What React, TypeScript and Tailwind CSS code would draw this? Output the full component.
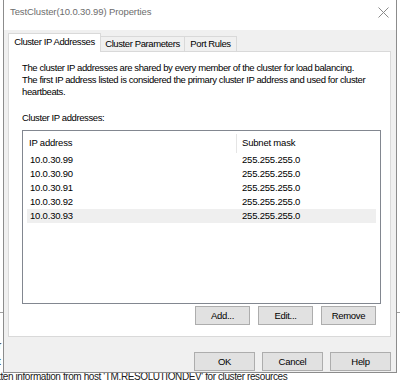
import React from "react"

const ips = ["10.0.30.99", "10.0.30.90", "10.0.30.91", "10.0.30.92", "10.0.30.93"]

function Btn({ label, w }: { label: string; w: string }) {
  return (
    <button className={`${w} h-[19px] bg-[#e1e1e1] border border-[#adadad] text-[9.5px] tracking-[-0.3px] text-black leading-none flex items-center justify-center`}>
      {label}
    </button>
  )
}

export default function App() {
  return (
    <div className="w-[400px] h-[380px] relative overflow-hidden bg-white text-black text-[9.5px] tracking-[-0.4px]" style={{ fontFamily: '"Liberation Sans", Arial, sans-serif' }}>
      {/* background window behind the dialog */}
      <div className="absolute left-0 top-[312px] w-full h-px bg-[#a0a0a0]" />
      <div className="absolute left-[-2px] top-[372px] text-[10px] leading-none text-[#202020] whitespace-nowrap">
        tten information from host 'TM.RESOLUTIONDEV' for cluster resources
      </div>
      <div className="absolute left-[-2px] top-[338px] flex flex-col text-[10px] leading-[16px] text-[#202020]">
        <span>r</span>
        <span>t</span>
      </div>

      {/* dialog */}
      <div className="absolute left-[3px] top-0 w-[394px] h-[373px] bg-[#f0f0f0] border border-t-0 border-[#8c8c8c] flex flex-col">
        <div className="h-[30px] bg-white flex items-center justify-between pl-[6px] pr-[7px] shrink-0">
          <span className="text-[9.5px] tracking-[-0.1px] text-[#6d6d6d] mt-[-5px]">TestCluster(10.0.30.99) Properties</span>
          <svg width="11" height="11" viewBox="0 0 11 11" className="mt-[-5px]">
            <path d="M0.5 0.5 L10.5 10.5 M10.5 0.5 L0.5 10.5" stroke="#8a8a8a" strokeWidth="1" fill="none" />
          </svg>
        </div>

        <div className="px-[4px] pt-[3px] flex flex-col flex-1">
          {/* tabs */}
          <div className="flex items-end h-[18px] relative z-10 whitespace-nowrap">
            <div className="h-[19px] w-[93px] bg-white border border-b-0 border-[#d9d9d9] flex items-center justify-center -mb-px pb-[1px]">
              Cluster IP Addresses
            </div>
            <div className="h-[15px] w-[84px] bg-[#f0f0f0] border border-l-0 border-b-0 border-[#d9d9d9] flex items-center justify-center">
              Cluster Parameters
            </div>
            <div className="h-[15px] w-[52px] bg-[#f0f0f0] border border-l-0 border-b-0 border-[#d9d9d9] flex items-center justify-center">
              Port Rules
            </div>
          </div>

          {/* panel */}
          <div className="h-[286px] w-[383px] bg-white border border-[#d9d9d9] px-[13px] pt-[10px] flex flex-col">
            <p className="leading-[12px]">
              The cluster IP addresses are shared by every member of the cluster for load balancing.
              <br />
              The first IP address listed is considered the primary cluster IP address and used for cluster
              <br />
              heartbeats.
            </p>
            <div className="leading-[12px] mt-[14px]">Cluster IP addresses:</div>

            <div className="mt-[6px] w-[359px] h-[174px] border border-[#828790] flex flex-col pt-[3px] tracking-[-0.2px]">
              <div className="flex h-[19px] items-center">
                <div className="w-[214px] pl-[6px] border-r border-[#e5e5e5] h-full flex items-center">IP address</div>
                <div className="pl-[5px]">Subnet mask</div>
              </div>
              <div className="flex flex-col">
                {ips.map((ip, i) => (
                  <div key={ip} className={`flex h-[14px] items-center mx-[4px] ${i === 4 ? "bg-[#efefef]" : ""}`}>
                    <div className="w-[211px] pl-[3px]">{ip}</div>
                    <div className="pl-[4px]">255.255.255.0</div>
                  </div>
                ))}
              </div>
            </div>

            <div className="flex justify-end gap-[8px] mt-[2px] pr-[1px]">
              <Btn label="Add..." w="w-[55px]" />
              <Btn label="Edit..." w="w-[55px]" />
              <Btn label="Remove" w="w-[55px]" />
            </div>
          </div>

          <div className="flex justify-end gap-[7px] mt-[15px] pr-[1px]">
            <Btn label="OK" w="w-[61px]" />
            <Btn label="Cancel" w="w-[61px]" />
            <Btn label="Help" w="w-[61px]" />
          </div>
        </div>
      </div>
    </div>
  )
}
